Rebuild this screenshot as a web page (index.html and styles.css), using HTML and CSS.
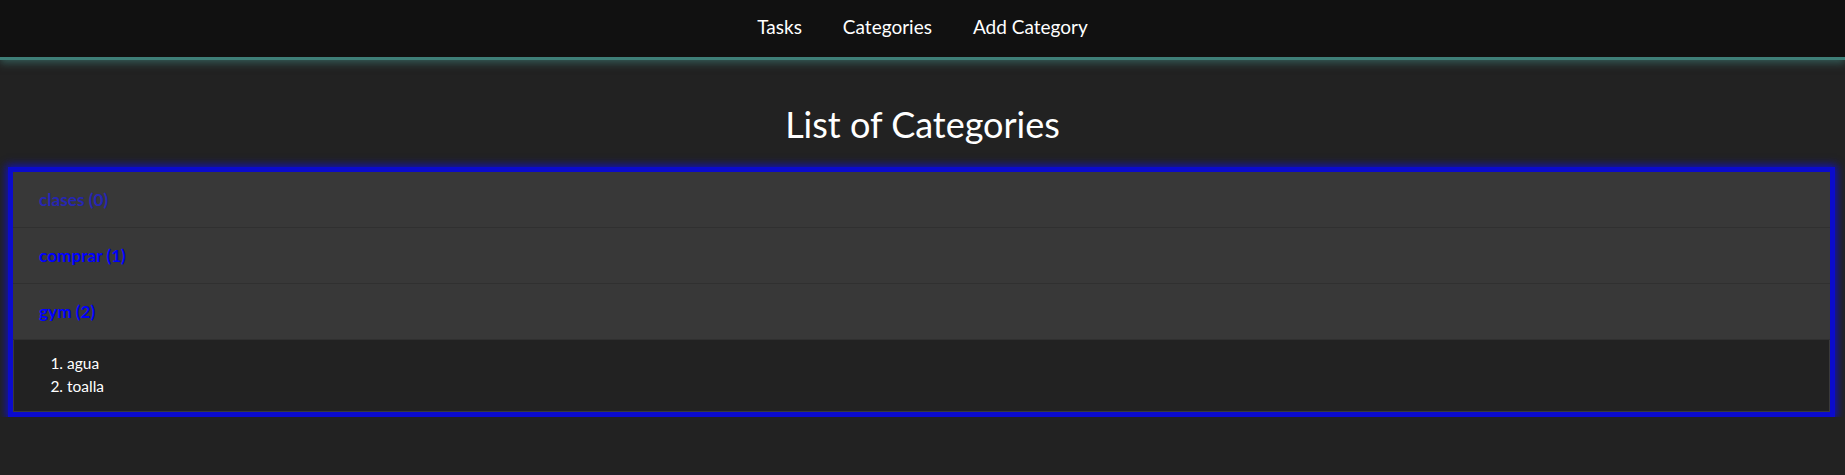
FILE: index.html
```html
<!DOCTYPE html>
<html lang="en">
  <head>
    <meta charset="UTF-8" />
    <title>Categories</title>
    <link rel="stylesheet" href="styles.css">
  </head>
  <body>
    <nav class="navbar">
      <a href="#">Tasks</a>
      <a href="#">Categories</a>
      <a href="#">Add Category</a>
    </nav>
    <h1>List of Categories</h1>
    <div class="container">
      <div class="cat-head"><a href="#" class="visited">clases (0)</a></div>
      <div class="cat-head"><a href="#">comprar (1)</a></div>
      <div class="cat-head"><a href="#">gym (2)</a></div>
      <div class="cat-body">
        <ol>
          <li>agua</li>
          <li>toalla</li>
        </ol>
      </div>
    </div>
  </body>
</html>
```
FILE: styles.css
```css
body {
  margin: 0;
  background-color: #222;
  color: #fff;
  font-family: Lato, "Open Sans", sans-serif;
}
.navbar {
  height: 57px;
  background-color: #111;
  border-bottom: 3px solid #3f7f78;
  box-shadow: 0 3px 8px rgba(63, 127, 120, 0.6);
  display: flex;
  justify-content: center;
  align-items: center;
  gap: 41px;
}
.navbar a {
  color: #fff;
  text-decoration: none;
  font-size: 19px;
  padding-bottom: 5px;
}
h1 {
  font-weight: normal;
  font-size: 36px;
  line-height: 45px;
  text-align: center;
  margin: 41.5px 0 20px;
}
.container {
  margin: 0 10px 0 8px;
  border: 5px solid #0b0bcc;
  box-shadow: 0 0 8px 2px #1212b8;
}
.cat-head {
  height: 55px;
  background-color: #383838;
  border-bottom: 1px solid #303030;
  padding-left: 26px;
  display: flex;
  align-items: center;
}
.cat-head a {
  color: #0000ff;
  font-weight: bold;
  font-size: 17.2px;
  text-decoration: none;
}
.cat-head a.visited {
  color: #2626b4;
}
.cat-body {
  background-color: #222;
  border: 1px solid #3a3a3a;
  border-top: none;
  padding: 12px 0 13px;
}
.cat-body ol {
  margin: 0;
  padding-left: 53px;
  font-size: 15.5px;
  line-height: 23px;
}
```
